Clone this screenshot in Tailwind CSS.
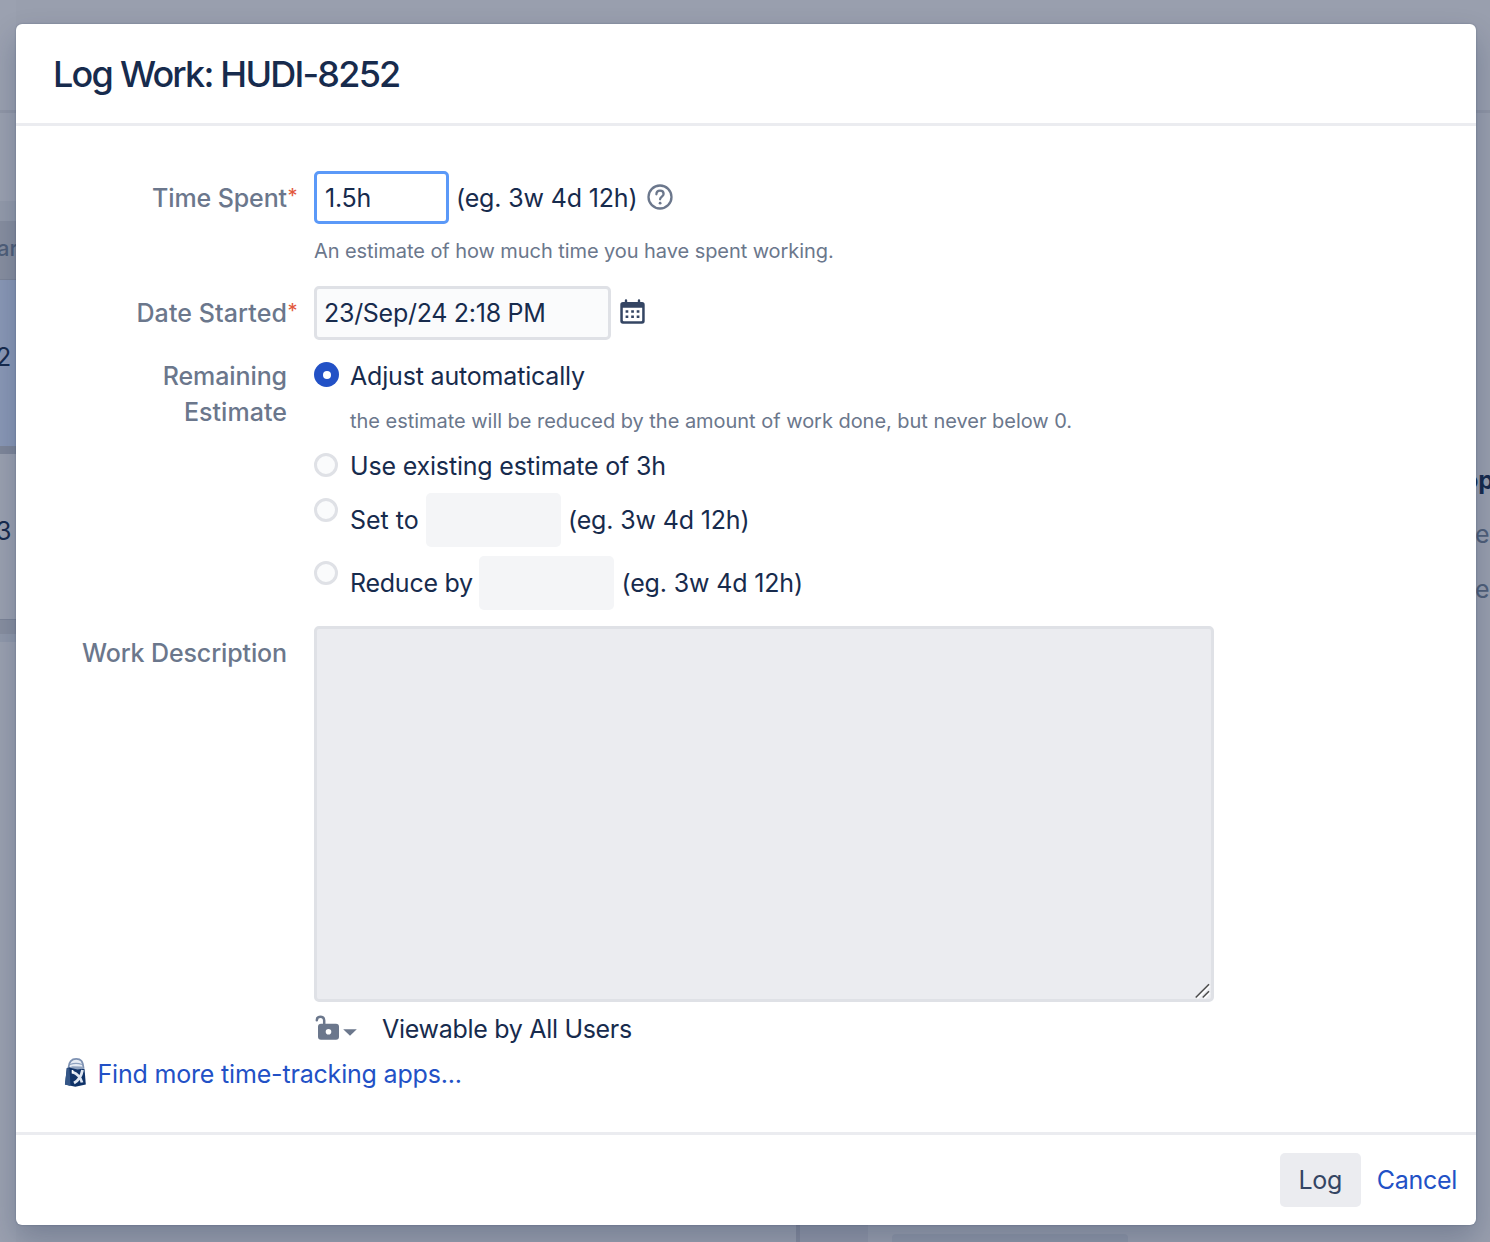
<!DOCTYPE html>
<html lang="en">
<head>
<meta charset="utf-8">
<title>Log Work</title>
<script src="https://cdn.jsdelivr.net/npm/@tailwindcss/browser@4"></script>
</head>
<body class="font-['Inter',sans-serif]">
<div class="relative h-[1242px] w-[1490px] overflow-hidden bg-[#999fae] text-[25px] leading-9 text-[#172b4d]">
  <!-- dimmed board behind the dialog -->
  <div class="absolute inset-0 flex justify-between">
    <div class="flex w-4 flex-col">
      <div class="h-[110px] bg-[#9ba1b0]"></div>
      <div class="h-[3px] bg-[#9197a7]"></div>
      <div class="h-[88px] bg-[#9ba1b0]"></div>
      <div class="h-5 bg-[#949bab]"></div>
      <div class="flex h-[58px] items-center bg-[#888fa0] text-[22px] font-medium text-[#505f79]"><span class="-mt-1 -ml-[3px]">ar</span></div>
      <div class="flex h-[167px] items-center border-t border-[#7d8598] bg-[#8a98b6]"><span class="-mt-3 -ml-1">2</span></div>
      <div class="h-2 bg-[#7f879a]"></div>
      <div class="flex h-[166px] items-center border-b border-[#7d8598] bg-[#9ba1b0]"><span class="-mt-3 -ml-1">3</span></div>
      <div class="h-3.5 bg-[#888fa0]"></div>
      <div class="h-2 bg-[#9199ab]"></div>
      <div class="grow bg-[#9ba1b0]"></div>
    </div>
    <div class="mr-[2px] flex w-[692px] items-end self-end">
      <div class="h-[18px] w-1 bg-[#858b9d]"></div>
      <div class="h-[18px] w-[68px] bg-[#9197a8]"></div>
      <div class="ml-6 h-2 w-[236px] rounded-t bg-[#8f97a8]"></div>
    </div>
    <div class="absolute right-0 flex w-3.5 flex-col">
      <div class="mt-[110px] h-[3px] bg-[#8f95a5]"></div>
      <div class="mt-[349px] h-9 font-bold"><span class="-ml-[13px]">op</span></div>
      <div class="mt-[18px] -ml-px h-9 text-[#505f79]">e</div>
      <div class="mt-[19px] -ml-px h-9 text-[#505f79]">e</div>
    </div>
  </div>

  <main class="relative mt-6 ml-4 flex h-[1201px] w-[1460px] flex-col rounded-md bg-white whitespace-nowrap shadow-[0_0_2px_rgba(9,30,66,0.3),0_14px_30px_rgba(9,30,66,0.24)]">
    <header class="flex h-[102px] items-center border-b-[3px] border-[#ebecf0] pl-[37px]">
      <h1 class="text-[36px] font-[450] tracking-[-1.78px]">Log Work: HUDI-8252</h1>
    </header>

    <form class="flex grow flex-col pt-[45px]">
      <!-- time spent -->
      <div class="flex h-[53px] items-center">
        <div class="relative w-[271px] text-right font-medium tracking-[-0.1px] text-[#6b778c]">Time Spent<span class="absolute top-[-2px] left-full ml-[0.5px] text-[20px] font-normal text-[#e2583b]">*</span></div>
        <div class="ml-[27px] flex h-[53px] w-[135px] items-center rounded-[5px] border-[3px] border-[#5b99f8] pl-2 tracking-[-0.2px]">1.5h</div>
        <div class="ml-[7px] tracking-[-0.15px]">(eg. 3w 4d 12h)</div>
        <svg class="mb-[2px] ml-[9.5px] size-[26px]" viewBox="0 0 26 26" fill="none" stroke="#6b778c">
          <circle cx="13" cy="13" r="11.5" stroke-width="2.3"/>
          <path d="M9.4 10.3c0-2.3 1.5-3.7 3.6-3.7s3.6 1.3 3.6 3.3c0 2.7-3.5 2.700-3.500 5.400" stroke-width="2.3" stroke-linecap="round"/>
          <circle cx="13.1" cy="19.200" r="1.4" fill="#6b778c" stroke="none"/>
        </svg>
      </div>
      <div class="mt-[9px] ml-[298px] text-[20px] tracking-[-0.07px] text-[#6b778c]">An estimate of how much time you have spent working.</div>

      <!-- date started -->
      <div class="mt-[17px] flex h-[54px] items-center">
        <div class="relative w-[271px] text-right font-medium tracking-[0.1px] text-[#6b778c]">Date Started<span class="absolute top-[-2px] left-full ml-[0.5px] text-[20px] font-normal text-[#e2583b]">*</span></div>
        <div class="ml-[27px] flex h-[54px] w-[297px] items-center rounded-[5px] border-[3px] border-[#dfe1e6] bg-[#fafbfc] pl-[7px] tracking-[-0.28px]">23/Sep/24 2:18 PM</div>
        <svg class="mb-0.5 ml-[9px] h-[26px] w-[25px]" viewBox="0 0 25 26" fill="#344563">
          <path fill-rule="evenodd" d="M4.800 1.500a1.200 1.200 0 0 1 2.400 0v1.500h10.600V1.500a1.200 1.200 0 0 1 2.400 0V3H22a2.700 2.700 0 0 1 2.700 2.700V22A2.700 2.700 0 0 1 22 24.700H3A2.700 2.700 0 0 1 .3 22V5.700A2.700 2.700 0 0 1 3 3h1.800zM2.800 8.800V21.300a1 1 0 0 0 1 1h17.400a1 1 0 0 0 1-1V8.800z"/>
          <path d="M5.600 11.200h2.700v2.500H5.600zm5.600 0h2.700v2.500h-2.700zm5.500 0h2.700v2.500h-2.700zM5.600 16.500h2.700V19H5.600zm5.600 0h2.700V19h-2.700zm5.500 0h2.700V19h-2.700z"/>
        </svg>
      </div>

      <!-- remaining estimate -->
      <div class="mt-[18px] flex">
        <div class="w-[271px] text-right font-medium text-[#6b778c]"><span class="tracking-[-0.1px]">Remaining</span><br><span class="tracking-[0.05px]">Estimate</span></div>
        <div class="ml-[27px] flex flex-col">
          <div class="flex">
            <span class="mt-1 flex size-[25px] items-center justify-center rounded-full bg-[#2251c6]"><i class="size-2 rounded-full bg-white"></i></span>
            <span class="ml-[11px] tracking-[-0.18px]">Adjust automatically</span>
          </div>
          <div class="mt-[9px] ml-9 text-[20px] tracking-[-0.03px] text-[#6b778c]">the estimate will be reduced by the amount of work done, but never below 0.</div>
          <div class="mt-[9px] flex">
            <span class="mt-[5px] size-6 rounded-full border-[3px] border-[#dfe1e6] bg-[#fafbfc]"></span>
            <span class="ml-3 tracking-[-0.18px]">Use existing estimate of 3h</span>
          </div>
          <div class="mt-[9px] flex h-[54px]">
            <span class="mt-[5px] size-6 rounded-full border-[3px] border-[#dfe1e6] bg-[#fafbfc]"></span>
            <span class="mt-[9px] ml-3 w-[76px]">Set to</span>
            <span class="h-[54px] w-[135px] rounded-[5px] bg-[#f4f5f7]"></span>
            <span class="mt-[9px] ml-[7px] tracking-[-0.15px]">(eg. 3w 4d 12h)</span>
          </div>
          <div class="mt-[9px] flex h-[54px]">
            <span class="mt-[5px] size-6 rounded-full border-[3px] border-[#dfe1e6] bg-[#fafbfc]"></span>
            <span class="mt-[9px] ml-3 w-[129px] tracking-[-0.25px]">Reduce by</span>
            <span class="h-[54px] w-[135px] rounded-[5px] bg-[#f4f5f7]"></span>
            <span class="mt-[9px] ml-[7.5px] tracking-[-0.15px]">(eg. 3w 4d 12h)</span>
          </div>
        </div>
      </div>

      <!-- work description -->
      <div class="mt-4 flex">
        <div class="mt-[9px] w-[271px] text-right font-medium tracking-[-0.12px] text-[#6b778c]">Work Description</div>
        <div class="ml-[27px] flex h-[376px] w-[900px] items-end justify-end rounded-[5px] border-[3px] border-[#dfe1e6] bg-[#ebecf0]">
          <svg class="size-[16px]" viewBox="0 0 16 16" fill="none">
            <path d="M2.500 15.500 15 3M9.500 15.500l5.500-5.500" stroke="#fff" stroke-width="1.200"/>
            <path d="M.700 14.500 14 1.200M7.700 14.500 14 8.200" stroke="#4d4d4d" stroke-width="1.500"/>
          </svg>
        </div>
      </div>
      <div class="mt-[9px] ml-[298px] flex">
        <svg class="mt-1 h-[26px] w-[46px]" viewBox="0 0 46 26" fill="#6b778c">
          <path d="M2.800 5.300C2.800 2.900 4.400 1.700 6.500 1.700s3.700 1.500 3.700 3.800V10" fill="none" stroke="#6b778c" stroke-width="2.500" stroke-linecap="round"/>
          <path fill-rule="evenodd" d="M7 8.800h15a3 3 0 0 1 3 3v10a3 3 0 0 1-3 3H7a3 3 0 0 1-3-3v-10a3 3 0 0 1 3-3zM14.500 14a2.800 2.800 0 1 0 0 5.600 2.800 2.800 0 0 0 0-5.600z"/>
          <path d="M29.200 14.200h13.600L36 20.800z"/>
        </svg>
        <span class="ml-[22px] tracking-[-0.3px]">Viewable by All Users</span>
      </div>
      <div class="mt-[9px] ml-12 flex">
        <svg class="mt-[1px] h-[30px] w-6" viewBox="0 0 24 30">
          <path d="M4.500 10.500C5 4 7.500 1.800 12.200 1.800S18.800 4 19.500 11" fill="#e6ebf3" stroke="#7d91b2" stroke-width="1.800"/>
          <path d="M6 7.500c4-1.500 8-1.500 12 0" fill="none" stroke="#8fa2bf" stroke-width="1.200"/>
          <path d="m1 27.500 1.800-16.500L6 10l14.500 1.700 1.300 15.800-10.500 2.300z" fill="#0f3268"/>
          <path d="m.9 27.500 1.900-16.500 2.700.5L6.500 29z" fill="#345687"/>
          <path d="m5 10.500 3.500-1.300 9 .4 3 2-7 .8z" fill="#8fa2bf"/>
          <path d="M8.500 15c4 1.500 8 5 9.500 10.500M18.500 13c-1 5.500-4 10.500-8.500 13" fill="none" stroke="#dfe6f1" stroke-width="2.800"/>
          <path d="M8.500 13v3.500" stroke="#fff" stroke-width="1.600"/>
        </svg>
        <span class="ml-[9.5px] tracking-[-0.18px] text-[#2251c6]">Find more time-tracking apps...</span>
      </div>
    </form>

    <footer class="flex h-[93px] items-center justify-end border-t-[3px] border-[#ebecf0] pr-[19px]">
      <div class="flex h-[54px] w-[81px] items-center justify-center rounded-[5px] bg-[#ebecf0] tracking-[-0.3px] text-[#344563]">Log</div>
      <div class="ml-4 tracking-[-0.3px] text-[#2251c6]">Cancel</div>
    </footer>
  </main>
</div>
</body>
</html>
